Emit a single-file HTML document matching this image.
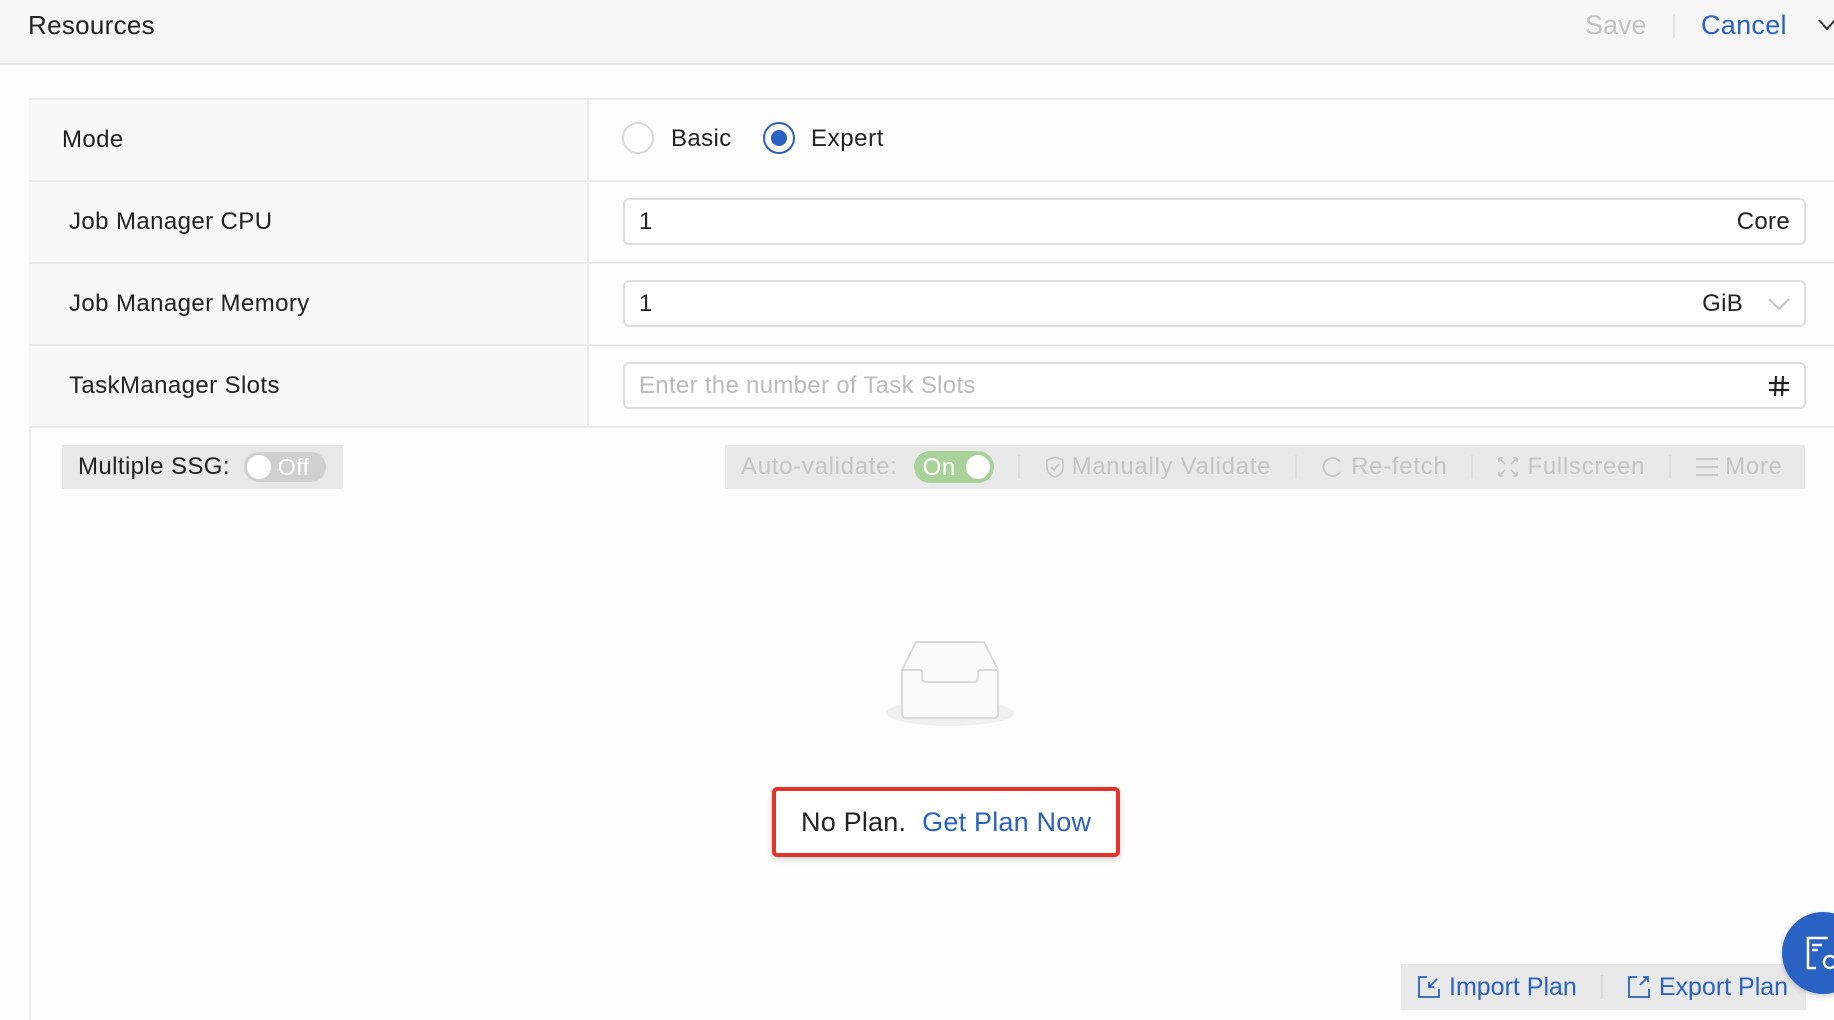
<!DOCTYPE html>
<html><head><meta charset="utf-8"><style>
*{box-sizing:border-box;margin:0;padding:0}
body{width:1834px;height:1020px;overflow:hidden;background:#fdfdfd;font-family:"Liberation Sans",sans-serif;color:#222;position:relative}
.a{position:absolute}
.hdr{left:0;top:0;width:1834px;height:65px;background:#f6f6f6;border-bottom:2px solid #e3e3e3}
.row{left:29px;width:1805px;height:82px;border-bottom:2px solid #ebebeb}
.lab{left:0;top:0;width:560px;height:100%;background:#f8f8f8;border-right:2px solid #ebebeb;font-size:24px;letter-spacing:.4px;display:flex;align-items:center}
.inp{left:594px;width:1183px;height:47px;top:16px;border:2px solid #dedede;border-radius:6px;background:#fff;font-size:24px;letter-spacing:.3px;display:flex;align-items:center;padding:0 14px;justify-content:space-between}
.tb{font-size:24px;letter-spacing:.7px;color:#c4c4c4;display:flex;align-items:center}
.sep{width:2px;height:24px;background:#dedede;margin:0 24px}
</style></head><body>
<div class="a hdr"></div>
<div class="a" style="left:28px;top:10px;font-size:26px;letter-spacing:.3px">Resources</div>
<div class="a" style="left:1585px;top:10px;font-size:27px;color:#c2c2c2">Save</div>
<div class="a" style="left:1673px;top:14px;width:2px;height:24px;background:#e3e3e3"></div>
<div class="a" style="left:1701px;top:10px;font-size:27px;letter-spacing:.3px;color:#2a62c4">Cancel</div>
<svg class="a" style="left:1818px;top:18px" width="18" height="14"><path d="M1 2 L9 11 L17 2" fill="none" stroke="#333" stroke-width="2"/></svg>

<div class="a" style="left:29px;top:99px;width:2px;height:921px;background:#ebebeb"></div>
<div class="a" style="left:29px;top:98px;width:1805px;height:2px;background:#ebebeb"></div>

<div class="a row" style="top:100px">
 <div class="a lab" style="padding-left:33px">Mode</div>
 <div class="a" style="left:593px;top:22px;width:32px;height:32px;border:2px solid #d8d8d8;border-radius:50%;background:#fff"></div>
 <div class="a" style="left:642px;top:25px;font-size:24px;letter-spacing:.4px">Basic</div>
 <div class="a" style="left:734px;top:22px;width:32px;height:32px;border:2px solid #2a62c4;border-radius:50%;background:#fff"><div style="margin:6px;width:16px;height:16px;border-radius:50%;background:#2a62c4"></div></div>
 <div class="a" style="left:782px;top:25px;font-size:24px;letter-spacing:.6px">Expert</div>
</div>
<div class="a row" style="top:182px">
 <div class="a lab" style="padding-left:40px">Job Manager CPU</div>
 <div class="a inp"><span>1</span><span>Core</span></div>
</div>
<div class="a row" style="top:264px">
 <div class="a lab" style="padding-left:40px">Job Manager Memory</div>
 <div class="a inp"><span>1</span><span>GiB <svg width="22" height="14" style="margin-left:18px"><path d="M1 2 L11 12 L21 2" fill="none" stroke="#bbb" stroke-width="1.6"/></svg></span></div>
</div>
<div class="a row" style="top:346px">
 <div class="a lab" style="padding-left:40px">TaskManager Slots</div>
 <div class="a inp"><span style="color:#bbb">Enter the number of Task Slots</span><svg width="22" height="22"><path d="M8 1 L7 21 M15 1 L14 21 M1 8 H21 M1 15 H21" stroke="#222" stroke-width="2.2"/></svg></div>
</div>

<div class="a" style="left:62px;top:445px;width:281px;height:44px;background:#e8e8e8;font-size:24px;letter-spacing:.4px;display:flex;align-items:center;padding-left:16px">Multiple SSG:
 <div style="margin-left:14px;width:82px;height:30px;border-radius:15px;background:#d0d0d0;position:relative"><div style="position:absolute;left:3px;top:3px;width:24px;height:24px;border-radius:50%;background:#fff"></div><span style="position:absolute;left:34px;top:2px;color:#fff;font-size:23px">Off</span></div>
</div>
<div class="a tb" style="left:725px;top:445px;width:1080px;height:44px;background:#e9e9e9;padding-left:16px">Auto-validate:
 <div style="margin-left:16px;width:80px;height:32px;border-radius:16px;background:#a8d29a;position:relative"><span style="position:absolute;left:9px;top:3px;color:#fff">On</span><div style="position:absolute;right:4px;top:4px;width:24px;height:24px;border-radius:50%;background:#fff"></div></div>
 <div class="sep"></div>
 <svg width="22" height="24" style="margin-right:6px"><path d="M11 2 L19 5 L19 12 Q19 19 11 22 Q3 19 3 12 L3 5 Z M7 12 L10 15 L15 9" fill="none" stroke="#c4c4c4" stroke-width="1.6"/></svg>Manually Validate
 <div class="sep"></div>
 <svg width="24" height="24" style="margin-right:6px"><path d="M19 7 A9 9 0 1 0 19 17" fill="none" stroke="#c4c4c4" stroke-width="1.8"/></svg>Re-fetch
 <div class="sep"></div>
 <svg width="22" height="22" style="margin-right:8px"><path d="M2 2 L8 8 M2 2 L2 6 M2 2 L6 2 M20 2 L14 8 M20 2 L16 2 M20 2 L20 6 M2 20 L8 14 M2 20 L2 16 M2 20 L6 20 M20 20 L14 14 M20 20 L20 16 M20 20 L16 20" stroke="#c4c4c4" stroke-width="1.6"/></svg>Fullscreen
 <div class="sep"></div>
 <svg width="24" height="20" style="margin-right:6px"><path d="M1 2 H23 M1 10 H23 M1 18 H23" stroke="#c4c4c4" stroke-width="1.8"/></svg>More
</div>

<div class="a" style="left:886px;top:700px;width:128px;height:26px;border-radius:50%;background:#f0f0f0"></div>
<svg class="a" style="left:900px;top:640px" width="100" height="80"><path d="M16 2 L84 2 L98 30 L98 74 Q98 78 94 78 L6 78 Q2 78 2 74 L2 30 Z" fill="#fafafa" stroke="#d9d9d9" stroke-width="2"/><path d="M2 30 L20 30 Q22 30 22 33 L22 38 Q22 42 26 42 L74 42 Q78 42 78 38 L78 33 Q78 30 80 30 L98 30" fill="none" stroke="#d9d9d9" stroke-width="2"/></svg>

<div class="a" style="left:772px;top:787px;width:348px;height:70px;border:4px solid #e5322a;border-radius:5px;background:#fff;box-shadow:0 3px 6px rgba(0,0,0,.15);font-size:27px;letter-spacing:.2px;display:flex;align-items:center;padding-left:25px">No Plan.<span style="color:#2a62c4;margin-left:16px">Get Plan Now</span></div>

<div class="a" style="left:1401px;top:964px;width:405px;height:46px;background:#e8e8e8;display:flex;align-items:center;font-size:25px;color:#2a62c4;padding-left:16px">
 <svg width="24" height="24" style="margin-right:8px"><path d="M10 2 H2 V22 H22 V14 M20 4 L12 12 M12 7 V12 H17" fill="none" stroke="#2a62c4" stroke-width="1.8"/></svg>Import Plan
 <div style="width:2px;height:24px;background:#d8d8d8;margin:0 24px"></div>
 <svg width="24" height="24" style="margin-right:8px"><path d="M10 2 H2 V22 H22 V14 M13 10 L21 2 M16 2 H21 V7" fill="none" stroke="#2a62c4" stroke-width="1.8"/></svg>Export Plan
</div>
<div class="a" style="left:1782px;top:912px;width:82px;height:82px;border-radius:50%;background:#2a62c4;box-shadow:0 2px 6px rgba(0,0,0,.2)"></div>
<svg class="a" style="left:1806px;top:936px" width="28" height="36"><path d="M22 2 H2 V32 H10" fill="none" stroke="#fff" stroke-width="2.5"/><path d="M6 9 H16 M6 14 H12" stroke="#fff" stroke-width="2.5"/><circle cx="24" cy="26" r="6" fill="none" stroke="#fff" stroke-width="2.5"/></svg>
</body></html>
